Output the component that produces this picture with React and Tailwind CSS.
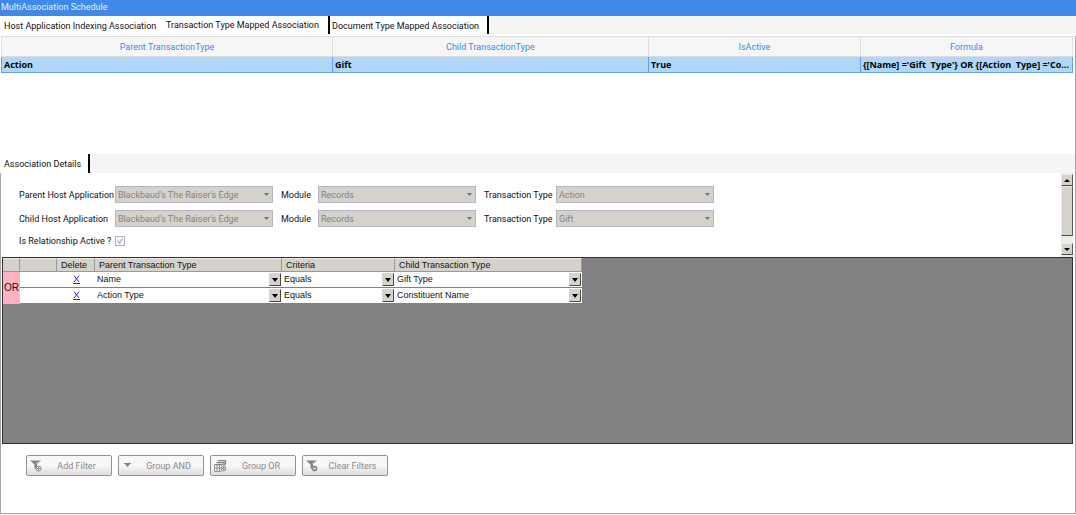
import React from "react";

const tabs = ["Host Application Indexing Association", "Transaction Type Mapped Association", "Document Type Mapped Association"];

const hostRows = [
  { id: "parent", label: "Parent Host Application", app: "Blackbaud's The Raiser's Edge", module: "Records", type: "Action" },
  { id: "child", label: "Child Host Application", app: "Blackbaud's The Raiser's Edge", module: "Records", type: "Gift" },
];

const criteria = [
  { parent: "Name", op: "Equals", child: "Gift Type" },
  { parent: "Action Type", op: "Equals", child: "Constituent Name" },
];

function DisabledSelect({ id, value }) {
  return (
    <div className="grid items-center">
      <select
        id={id}
        disabled
        defaultValue={value}
        className="col-start-1 row-start-1 h-[17px] w-full appearance-none border border-[#b4b4c4] bg-[#d5d2cc] pl-0.5 pr-4 text-[9px] leading-[14px] text-[#85837f] opacity-100"
      >
        <option>{value}</option>
      </select>
      <svg className="pointer-events-none col-start-1 row-start-1 mr-1 justify-self-end" width="5" height="3" viewBox="0 0 5 3" aria-hidden="true">
        <path d="M0 0h5L2.500 3z" fill="#777570" />
      </svg>
    </div>
  );
}

function GridSelect({ label, value }) {
  return (
    <div className="grid items-center">
      <select
        aria-label={label}
        defaultValue={value}
        className="col-start-1 row-start-1 h-[15px] w-full appearance-none bg-white pl-0.5 pr-4 text-[9px] leading-[15px] text-[#111111]"
      >
        <option>{value}</option>
      </select>
      <span className="pointer-events-none col-start-1 row-start-1 mr-px grid h-[13px] w-3 place-items-center justify-self-end border border-t-[#d8d5cf] border-l-[#d8d5cf] border-r-[#494949] border-b-[#494949] bg-[#d5d2cc]">
        <svg width="6" height="4" viewBox="0 0 6 4" aria-hidden="true">
          <path d="M0 0h6L3 4z" fill="#000" />
        </svg>
      </span>
    </div>
  );
}

function FunnelIcon({ minus }) {
  return (
    <svg width="12" height="12" viewBox="0 0 12 12" fill="none" aria-hidden="true">
      <path d="M0 .5h11L7 4.500V10L4.500 8V4.500z" fill="#858285" />
      <path d="M6.500 4L9 1.500" stroke="#efedf0" />
      <circle cx="8.500" cy="8.500" r="2.500" fill={minus ? "#98959a" : "#efedf0"} stroke="#858285" />
      <path d={minus ? "M7 8.500h3" : "M7 8.500h3M8.500 7v3"} stroke={minus ? "#f5f3f5" : "#858285"} strokeWidth=".8" />
    </svg>
  );
}

function GroupAndIcon() {
  return (
    <svg width="12" height="12" viewBox="0 0 12 12" aria-hidden="true">
      <path d="M2 3.500h7" stroke="#858285" />
      <path d="M3 4h5L5.500 7z" fill="#858285" />
    </svg>
  );
}

function GroupOrIcon() {
  return (
    <svg width="13" height="12" viewBox="0 0 13 12" fill="none" aria-hidden="true">
      <path d="M4 .7h7.500v4M2.500 2.700H10v3M1 4.700h8" stroke="#858285" strokeWidth="1.300" />
      <path d="M.5 4.500v7h7M.5 8h7M3 5v6M5.500 5v6" stroke="#989598" />
      <circle cx="9.500" cy="8.500" r="2.300" fill="#f3f1f4" stroke="#858285" />
      <path d="M8 8.500h3M9.500 7v3" stroke="#858285" strokeWidth=".8" />
    </svg>
  );
}

const actions = [
  { label: "Add Filter", icon: <FunnelIcon /> },
  { label: "Group AND", icon: <GroupAndIcon /> },
  { label: "Group OR", icon: <GroupOrIcon /> },
  { label: "Clear Filters", icon: <FunnelIcon minus /> },
];

function ScrollButton({ label, path }) {
  return (
    <button type="button" aria-label={label} className="grid h-3 w-3 shrink-0 place-items-center border border-t-[#eeece8] border-l-[#eeece8] border-r-[#5e5e5e] border-b-[#4c4c4c] bg-[#d5d2cc]">
      <svg width="6" height="3" viewBox="0 0 6 3" aria-hidden="true">
        <path d={path} fill="#000" />
      </svg>
    </button>
  );
}

export default function App() {
  return (
    <main className="flex min-h-screen flex-col bg-[#f5f5f5] font-['Roboto','Open_Sans',sans-serif] text-[9px] leading-[14px] text-[#111111]">
      <h1 className="h-4 bg-[#3f89e8] pl-px text-[#e6f0fd]">MultiAssociation Schedule</h1>

      <nav className="flex h-5 items-start border-b-2 border-white" role="tablist" aria-label="Schedules">
        {tabs.map((t, i) => (
          <button
            key={t}
            type="button"
            role="tab"
            aria-selected={i === 1}
            className={
              i === 0
                ? "h-[18px] w-[162px] bg-white pl-1 pt-0.5 text-left whitespace-nowrap"
                : i === 1
                ? "h-[18px] w-[168px] border-r-2 border-black bg-white pb-px pl-1 text-left whitespace-nowrap"
                : "h-[18px] w-[159px] border-r-2 border-black bg-white pl-0.5 pt-0.5 text-left whitespace-nowrap"
            }
          >
            {t}
          </button>
        ))}
      </nav>

      <div className="mb-px flex grow flex-col border-r border-b border-[#a6a6a6] bg-white pr-0.5">
        <section className="h-[118px] pl-px" aria-label="Mapped associations">
          <table className="w-full table-fixed border-collapse">
            <colgroup>
              <col className="w-[30.9%]" />
              <col className="w-[29.5%]" />
              <col className="w-[19.8%]" />
              <col className="w-[19.8%]" />
            </colgroup>
            <thead>
              <tr className="h-5 bg-[#f6f6f6] text-[#3f89e8]">
                {["Parent TransactionType", "Child TransactionType", "IsActive", "Formula"].map((h) => (
                  <th key={h} className="border border-[#dddddd] p-0 font-normal">{h}</th>
                ))}
              </tr>
            </thead>
            <tbody>
              <tr className="h-4 bg-[#b2d6f7] font-['Open_Sans','Noto_Sans',sans-serif] font-bold text-black">
                {["Action", "Gift", "True", "{[Name] ='Gift  Type'} OR {[Action  Type] ='Co..."].map((c) => (
                  <td key={c} className="overflow-hidden whitespace-pre border border-[#62a0ea] px-0.5 py-0 leading-3">{c}</td>
                ))}
              </tr>
            </tbody>
          </table>
        </section>

        <div className="-mr-0.5 flex h-[19px] bg-[#f5f5f5]" role="tablist" aria-label="Details">
          <button type="button" role="tab" aria-selected="true" className="h-[19px] w-[90px] whitespace-nowrap border-r-2 border-black bg-white pl-1 text-left">
            Association Details
          </button>
        </div>

        <div className="flex grow flex-col border-l border-[#a6a6a6] pl-px">
          <section className="flex h-[84px] justify-between" aria-label="Association details">
            <div className="grid grid-cols-[96px_158px_45px_158px_80px_158px] content-start gap-y-[7px] whitespace-nowrap pl-[17px] pt-[13px]">
              {hostRows.map((r) => (
                <React.Fragment key={r.id}>
                  <label htmlFor={`${r.id}-app`} className="pt-0.5">{r.label}</label>
                  <DisabledSelect id={`${r.id}-app`} value={r.app} />
                  <label htmlFor={`${r.id}-module`} className="pl-2 pt-0.5">Module</label>
                  <DisabledSelect id={`${r.id}-module`} value={r.module} />
                  <label htmlFor={`${r.id}-type`} className="pl-2 pt-0.5">Transaction Type</label>
                  <DisabledSelect id={`${r.id}-type`} value={r.type} />
                </React.Fragment>
              ))}
              <label htmlFor="active">Is Relationship Active ?</label>
              <div className="grid w-2.5 place-items-center self-center">
                <input id="active" type="checkbox" defaultChecked disabled className="col-start-1 row-start-1 h-2.5 w-2.5 appearance-none border border-[#b4b4c4] bg-[#f3f6fb]" />
                <svg className="pointer-events-none col-start-1 row-start-1" width="6" height="6" viewBox="0 0 6 6" fill="none" aria-hidden="true">
                  <path d="M.7 2.500L2.500 5 5.500.5" stroke="#9fb4da" strokeWidth="1.300" />
                </svg>
              </div>
            </div>
            <div className="flex w-3 flex-col bg-[#ececea] pb-0.5 pt-px">
              <ScrollButton label="Scroll up" path="M3 0L6 3H0z" />
              <div className="h-[50px] border border-t-[#eeece8] border-l-[#eeece8] border-r-[#5e5e5e] border-b-[#4c4c4c] bg-[#d5d2cc]" />
              <div className="grow" />
              <ScrollButton label="Scroll down" path="M0 0h6L3 3z" />
            </div>
          </section>

          <section className="h-[187px] border border-[#303030] bg-[#848184] font-['Liberation_Sans',sans-serif] leading-3" aria-label="Criteria">
            <table className="w-[579px] table-fixed border-separate border-spacing-0">
              <colgroup>
                <col className="w-[17px]" />
                <col className="w-[37px]" />
                <col className="w-[38px]" />
                <col className="w-[187px]" />
                <col className="w-[113px]" />
                <col className="w-[187px]" />
              </colgroup>
              <thead>
                <tr className="h-[14px] bg-[#d5d2cc] text-left">
                  {["", "", "Delete", "Parent Transaction Type", "Criteria", "Child Transaction Type"].map((h, i) => (
                    <th key={i} className="border-r border-b border-t border-r-[#9c9a96] border-b-[#9c9a96] border-t-[#eeece8] py-0 pl-1 pr-0 font-normal">{h}</th>
                  ))}
                </tr>
              </thead>
              <tbody>
                {criteria.map((c, i) => (
                  <tr key={c.parent} className="h-4 bg-white">
                    {i === 0 && <td rowSpan={2} className="bg-[#ffb1c2] p-0 text-center text-[10px]">OR</td>}
                    <td className="border-b border-[#848184] p-0" />
                    <td className="border-b border-[#848184] p-0 text-center">
                      <button type="button" aria-label={`Delete ${c.parent}`} className="block w-full">
                        <svg className="mx-auto" width="7" height="9" viewBox="0 0 7 9" fill="none" stroke="#2222ee" aria-hidden="true">
                          <path d="M1 .5l5 6.500M6 .5L1 7M0 8.500h7" />
                        </svg>
                      </button>
                    </td>
                    <td className="border-b border-[#848184] p-0"><GridSelect label="Parent Transaction Type" value={c.parent} /></td>
                    <td className="border-b border-[#848184] p-0"><GridSelect label="Criteria" value={c.op} /></td>
                    <td className="border-b border-[#848184] p-0"><GridSelect label="Child Transaction Type" value={c.child} /></td>
                  </tr>
                ))}
              </tbody>
            </table>
          </section>

          <div className="flex gap-1.5 pb-9 pl-6 pt-[11px]">
            {actions.map((a) => (
              <button
                key={a.label}
                type="button"
                disabled
                className="flex h-[21px] w-[86px] items-center rounded-[2px] border border-[#949194] bg-linear-to-b from-[#f8f7f8] from-50% to-[#dedbdf] pl-[3px] text-[#8b888c]"
              >
                {a.icon}
                <span className="grow text-center">{a.label}</span>
              </button>
            ))}
          </div>
        </div>
      </div>
    </main>
  );
}
